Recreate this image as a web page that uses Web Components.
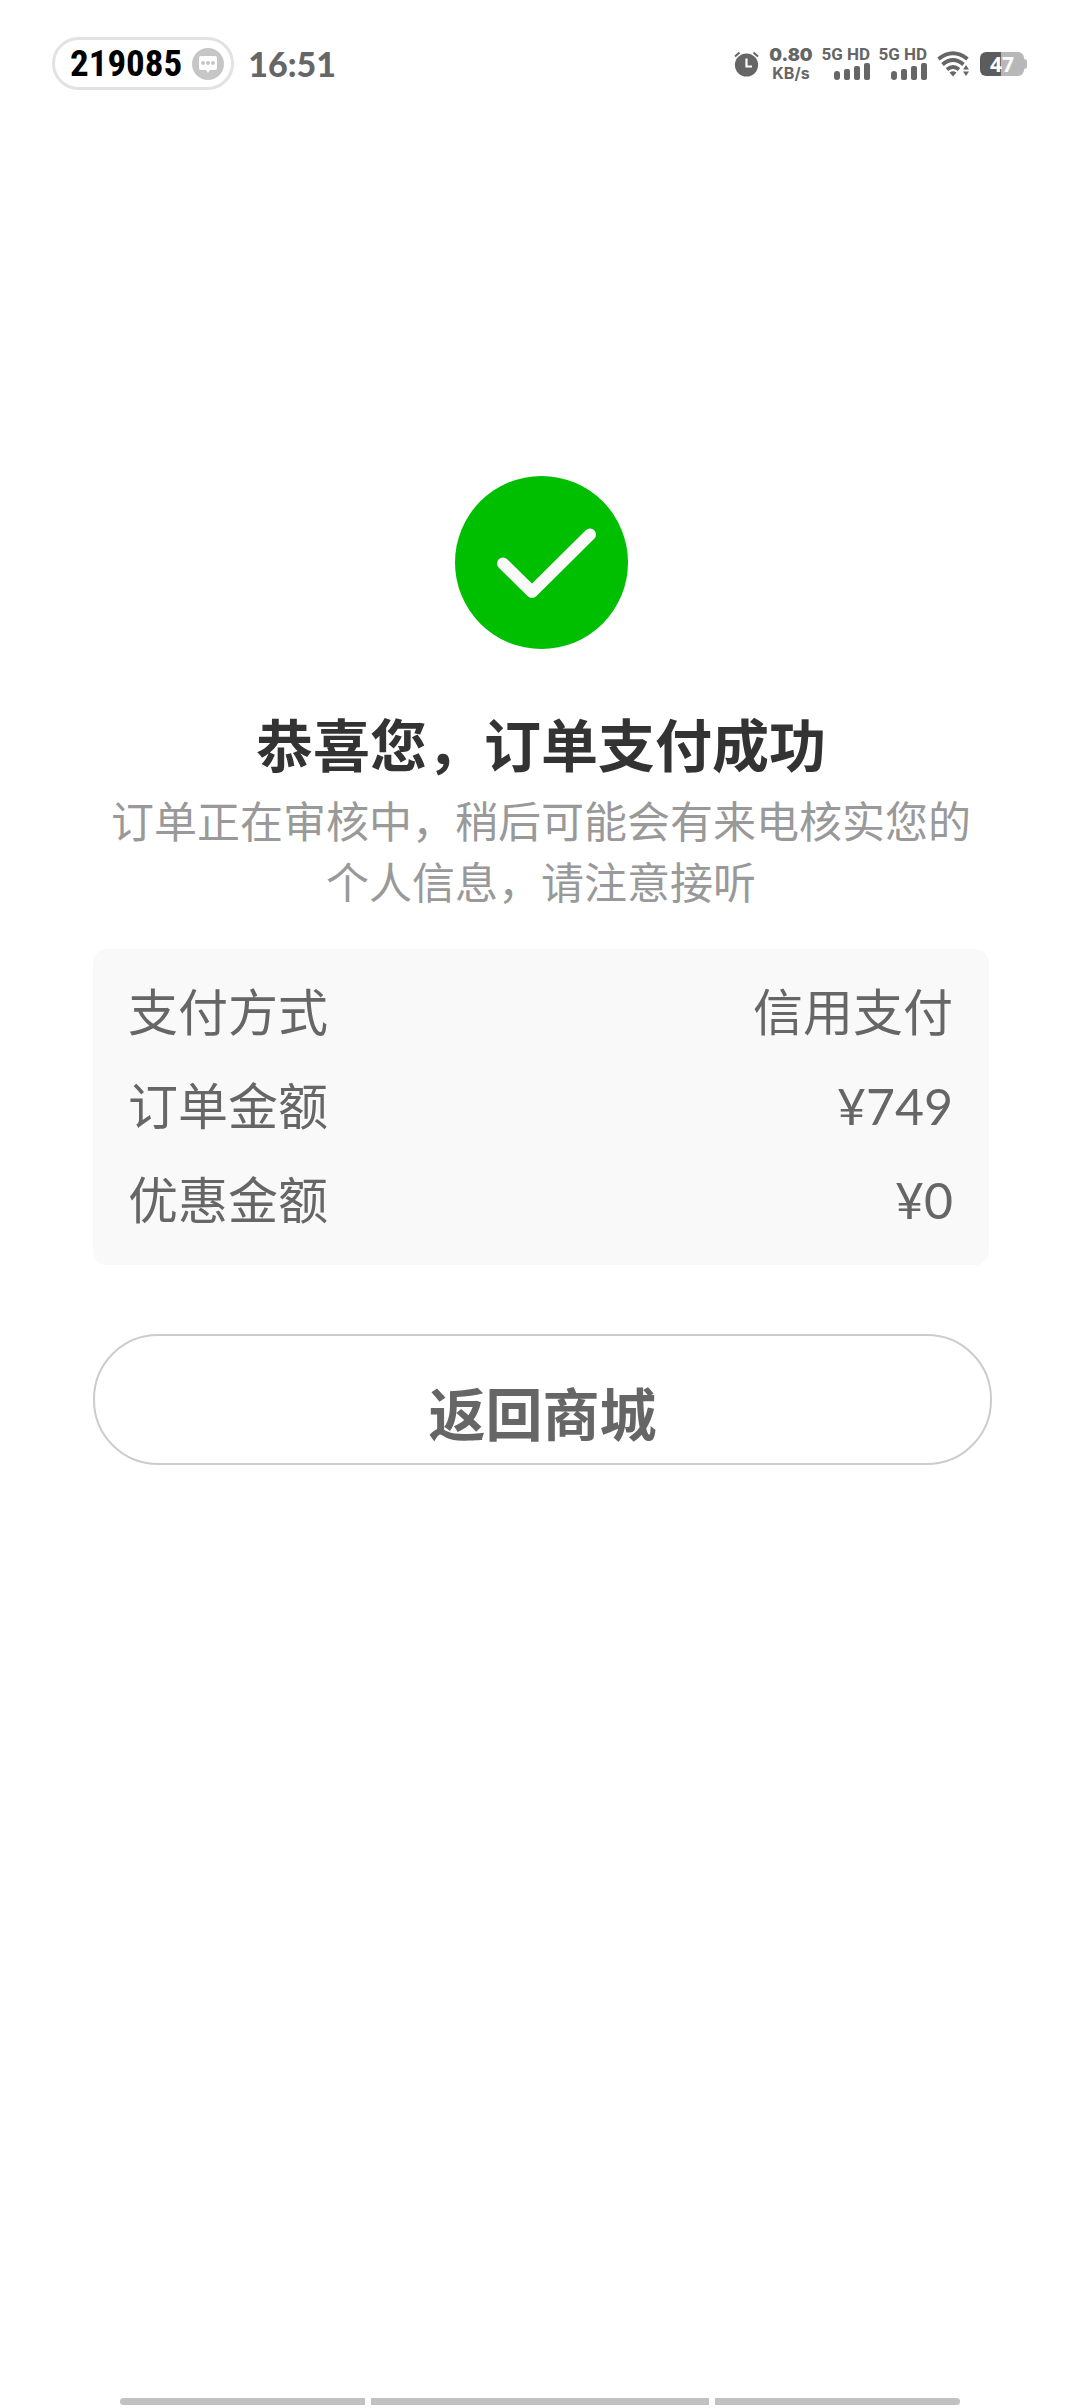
<!DOCTYPE html>
<html lang="zh-CN">
<head>
<meta charset="utf-8">
<meta name="viewport" content="width=device-width, initial-scale=1">
<title>订单支付成功</title>
<style>
  html, body { margin: 0; }
  body {
    background: #fff;
    color: #666;
    font-family: "Noto Sans CJK SC", sans-serif;
  }
</style>
</head>
<body>
<pay-page>
  <status-bar slot="status" code="219085" time="16:51" speed="0.80" battery="47"></status-bar>
  <result-head heading="恭喜您，订单支付成功">订单正在审核中，稍后可能会有来电核实您的个人信息，请注意接听</result-head>
  <order-card>
    <order-row label="支付方式">信用支付</order-row>
    <order-row label="订单金额">¥749</order-row>
    <order-row label="优惠金额">¥0</order-row>
  </order-card>
  <pill-button>返回商城</pill-button>
  <nav-hints slot="nav"></nav-hints>
</pay-page>

<script>
// page frame: status bar, content, gesture hints
customElements.define(
  "pay-page",
  class extends HTMLElement {
    connectedCallback() {
      this.attachShadow({ mode: "open" }).innerHTML =
        "<style>" +
        ":host{display:flex;flex-direction:column;min-height:100vh}" +
        "main{flex:1;display:flex;flex-direction:column;padding:351px 91px 0 93px}" +
        "</style>" +
        "<slot name=status></slot>" +
        "<main><slot></slot></main>" +
        "<slot name=nav></slot>";
    }
  }
);

// one sim: network label over four signal bars
customElements.define(
  "sim-signal",
  class extends HTMLElement {
    connectedCallback() {
      this.attachShadow({ mode: "open" }).innerHTML =
        "<style>" +
        ":host{display:flex;flex-direction:column;align-items:flex-end;width:47px;padding-bottom:2px;" +
        "font:700 17px/17px Roboto,sans-serif;white-space:nowrap}" +
        "svg{display:block}" +
        "</style>" +
        "<span>5G HD</span>" +
        '<svg width="36" height="17" viewBox="0 0 36 17" fill="#666" aria-hidden="true">' +
        '<rect x="0" y="8" width="6" height="9" rx="3"/>' +
        '<rect x="10" y="6" width="6" height="11" rx="2"/>' +
        '<rect x="20" y="3" width="6" height="14" rx="2"/>' +
        '<rect x="30" y="0" width="6" height="17" rx="2"/>' +
        "</svg>";
    }
  }
);

/**
 * Phone status bar.
 * attributes: code, time, speed (KB/s), battery (percent)
 */
customElements.define(
  "status-bar",
  class extends HTMLElement {
    connectedCallback() {
      const get = (name) => this.getAttribute(name) || "";
      this.attachShadow({ mode: "open" }).innerHTML =
        "<style>" +
        ":host{display:flex;align-items:center;justify-content:space-between;" +
        "box-sizing:border-box;padding:37px 53px 35px 52px;color:#666}" +
        ".side{display:flex;align-items:center}" +
        ".left{gap:14px}.right{gap:10px}" +
        "svg{display:block;flex:none}" +
        ".pill{display:flex;align-items:center;gap:10px;box-sizing:border-box;height:53px;" +
        "padding:0 7px 0 15px;border:3px solid #e2e2e2;border-radius:27px}" +
        '.code{font:700 37px/47px "Liberation Sans Narrow","Roboto Condensed",sans-serif;color:#000}' +
        ".time{font:900 34px/40px Lato,sans-serif}" +
        ".net{display:flex;flex-direction:column;align-items:center;width:44px;" +
        "font:700 16px/18px Inter,sans-serif}" +
        ".net b{font-size:18px}" +
        ".cell{display:flex;align-items:center}" +
        ".level{box-sizing:border-box;width:44px;height:24px;border-radius:6px;color:#fff;" +
        "background:linear-gradient(90deg,#5c5c5c 47%,#b8b8b8 47%);" +
        'font:700 21px/24px "Noto Sans",sans-serif;text-align:center}' +
        ".nub{width:3px;height:10px;border-radius:0 3px 3px 0;background:#b8b8b8}" +
        "</style>" +
        "<div class='side left'>" +
        "<div class=pill><span class=code>" + get("code") + "</span>" +
        '<svg width="32" height="32" viewBox="0 0 32 32" aria-hidden="true">' +
        '<circle cx="16" cy="16" r="16" fill="#c6c6c6"/>' +
        '<path d="M9 8h14q2 0 2 2v10q0 2-2 2h-5l-2 3-2-3H9q-2 0-2-2V10q0-2 2-2z" fill="#fff"/>' +
        '<g fill="#c6c6c6"><circle cx="11" cy="15" r="2"/><circle cx="16" cy="15" r="2"/><circle cx="21" cy="15" r="2"/></g>' +
        "</svg></div>" +
        "<span class=time>" + get("time") + "</span>" +
        "</div>" +
        "<div class='side right'>" +
        // alarm clock
        '<svg width="25" height="26" viewBox="0 0 25 26" fill="none" aria-hidden="true">' +
        '<circle cx="12.5" cy="14" r="11.6" fill="#666"/>' +
        '<path d="M1 5.5L5.5 1.5M24 5.5L19.5 1.5" stroke="#666" stroke-width="2"/>' +
        '<path d="M12.5 7.5V15.5H18" stroke="#fff" stroke-width="2.2"/>' +
        "</svg>" +
        "<div class=net><b>" + get("speed") + "</b><span>KB/s</span></div>" +
        "<sim-signal></sim-signal><sim-signal></sim-signal>" +
        // wifi with up and down arrows
        '<svg width="33" height="26" viewBox="0 0 33 26" fill="none" stroke="#666" stroke-width="3.8" aria-hidden="true">' +
        '<path d="M1.5 8Q16-3.5 30.5 8M5.5 13.5Q16 4.5 26.5 13.5M10 18.5Q16 13.5 22 18.5"/>' +
        '<path d="M12.5 21.5q3.5-2.5 7 0l-3.5 4z" fill="#666" stroke="none"/>' +
        '<path d="M26 18.5l3-4.5 3 4.5zM26 20.5h6l-3 4.5z" fill="#666" stroke="none"/>' +
        "</svg>" +
        "<div class=cell><span class=level>" + get("battery") + "</span><span class=nub></span></div>" +
        "</div>";
    }
  }
);

// green tick, heading and slotted note
customElements.define(
  "result-head",
  class extends HTMLElement {
    connectedCallback() {
      this.attachShadow({ mode: "open" }).innerHTML =
        "<style>" +
        ":host{display:flex;flex-direction:column;align-items:center;text-align:center}" +
        "svg{display:block}" +
        "h1{margin:50px 0 4px;font-size:57px;line-height:86px;font-weight:700;color:#333}" +
        "p{margin:0;font-size:43px;line-height:61px;color:#999}" +
        "</style>" +
        '<svg width="173" height="173" viewBox="0 0 173 173" aria-hidden="true">' +
        '<circle cx="86.5" cy="86.5" r="86.5" fill="#00be00"/>' +
        '<path d="M48 87.5L77 116L135 58.5" fill="none" stroke="#fafafa" stroke-width="12" stroke-linecap="round" stroke-linejoin="round"/>' +
        "</svg>" +
        "<h1>" + this.getAttribute("heading") + "</h1>" +
        "<p><slot></slot></p>";
    }
  }
);

customElements.define(
  "order-card",
  class extends HTMLElement {
    connectedCallback() {
      this.attachShadow({ mode: "open" }).innerHTML =
        "<style>" +
        ":host{display:block;margin-top:38px;padding:16px 36px 18px 35px;border-radius:14px;background:#f9f9f9}" +
        "</style><slot></slot>";
    }
  }
);

customElements.define(
  "order-row",
  class extends HTMLElement {
    connectedCallback() {
      this.attachShadow({ mode: "open" }).innerHTML =
        "<style>" +
        ":host{display:flex;justify-content:space-between;" +
        'font-family:Lato,"Noto Sans CJK SC",sans-serif;font-size:50px;line-height:94px}' +
        "</style>" +
        "<span>" + this.getAttribute("label") + "</span>" +
        "<span><slot></slot></span>";
    }
  }
);

customElements.define(
  "pill-button",
  class extends HTMLElement {
    connectedCallback() {
      this.attachShadow({ mode: "open" }).innerHTML =
        "<style>" +
        // runs slightly wider than the card above it
        ":host{display:block;margin:69px -3px 0 0}" +
        "button{display:block;box-sizing:border-box;width:100%;height:131px;padding:22px 0 0;" +
        "border:2px solid #ccc;border-radius:65px;background:#fff;color:#666;" +
        "font:inherit;font-size:57px;line-height:86px;font-weight:700;cursor:pointer}" +
        "</style>" +
        "<button type=button><slot></slot></button>";
    }
  }
);

// three gesture hints along the bottom edge
customElements.define(
  "nav-hints",
  class extends HTMLElement {
    connectedCallback() {
      this.attachShadow({ mode: "open" }).innerHTML =
        "<style>" +
        ":host{display:flex;gap:6px;padding:0 120px 3px}" +
        "i{flex:245;height:7px;background:#c1c1c1}" +
        "i:nth-of-type(2){flex:338}" +
        "i:first-of-type{border-radius:4px 0 0 4px}" +
        "i:last-of-type{border-radius:0 4px 4px 0}" +
        "</style><i></i><i></i><i></i>";
    }
  }
);
</script>
</body>
</html>
